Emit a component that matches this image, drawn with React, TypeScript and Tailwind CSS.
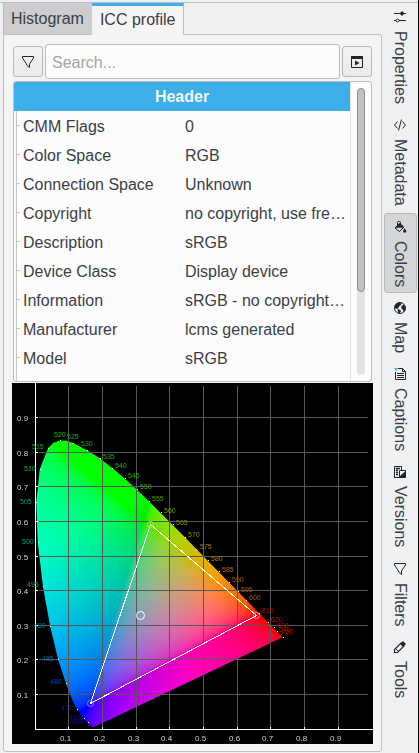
import { useLayoutEffect, useRef, type ReactNode } from 'react';

const FIELDS: [string, string][] = [
  ['CMM Flags', '0'],
  ['Color Space', 'RGB'],
  ['Connection Space', 'Unknown'],
  ['Copyright', 'no copyright, use fre…'],
  ['Description', 'sRGB'],
  ['Device Class', 'Display device'],
  ['Information', 'sRGB - no copyright…'],
  ['Manufacturer', 'lcms generated'],
  ['Model', 'sRGB'],
];

/* Chart geometry: plot origin and the size of one chromaticity unit. */
const SIZE = 361;
const X0 = 23;
const Y0 = 346;
const UX = 337;
const UY = 346;

const toX = (cx: number) => X0 + cx * UX;
const toY = (cy: number) => Y0 - cy * UY;

/* Grid line pixel for each tenth. */
const gridX = (n: number) => Math.floor(toX(n / 10));
const gridY = (n: number) => Math.floor(toY(n / 10));

/* Spectral locus, CIE 1931 xy. */
const LOCUS: [number, number][] = [
  [0.1741, 0.005], [0.1714, 0.0051], [0.1644, 0.0109], [0.1566, 0.0177], [0.144, 0.0297],
  [0.1241, 0.0578], [0.1096, 0.0868], [0.0913, 0.1327], [0.0687, 0.2007], [0.0454, 0.295],
  [0.0235, 0.4127], [0.0082, 0.5384], [0.0039, 0.6548], [0.0139, 0.7502], [0.0389, 0.812],
  [0.055, 0.827], [0.0743, 0.8338], [0.0943, 0.833], [0.1142, 0.8262], [0.1547, 0.8059],
  [0.1929, 0.7816], [0.2296, 0.7543], [0.2658, 0.7243], [0.3016, 0.6923], [0.3373, 0.6589],
  [0.3731, 0.6245], [0.4087, 0.5896], [0.4441, 0.5547], [0.4788, 0.5202], [0.5125, 0.4866],
  [0.5448, 0.4544], [0.5752, 0.4242], [0.6029, 0.3965], [0.627, 0.3725], [0.6658, 0.334],
  [0.6915, 0.3083], [0.7079, 0.292], [0.719, 0.2809], [0.7347, 0.2653],
];

/* Wavelength, label position, colour. */
const WAVES: [number, number, number, string][] = [
  [450, 60, 341, '#2a00a0'], [460, 57, 337, '#1c00a8'], [470, 49, 327, '#0018b0'],
  [480, 38, 301, '#0048b0'], [485, 30, 278, '#0068a8'], [490, 22, 245, '#007c98'],
  [495, 15, 204, '#009c84'], [500, 10, 161, '#00a47c'], [505, 8, 121, '#00a468'],
  [510, 12, 88, '#00a850'], [515, 20, 66, '#00ac30'], [520, 42, 54, '#18bc18'],
  [525, 55, 56, '#18a818'], [530, 69, 63, '#18b010'], [535, 91, 76, '#20b010'],
  [540, 103, 85, '#28b008'], [545, 116, 95, '#30a808'], [550, 128, 106, '#38a808'],
  [555, 140, 118, '#50a800'], [560, 152, 130, '#68a000'], [565, 164, 142, '#7c9400'],
  [570, 176, 154, '#8c8c00'], [575, 188, 166, '#9c8400'], [580, 199, 178, '#a47800'],
  [585, 210, 189, '#ac6c00'], [590, 220, 199, '#b06000'], [595, 229, 209, '#b85400'],
  [600, 237, 217, '#bc4c08'], [610, 250, 230, '#b41c08'], [620, 259, 239, '#b81408'],
  [630, 265, 245, '#a80c08'], [640, 267, 249, '#a80c08'], [650, 270, 251, '#b00c08'],
];

const MARKS = LOCUS.filter((_, i) => i > 2 && i !== 6 && i !== 15 && i !== 17);
const TENTHS = [1, 2, 3, 4, 5, 6, 7, 8, 9];

function gamma(v: number) {
  const c = Math.min(1, Math.max(0, v));
  return 255 * (c <= 0.0031308 ? 12.92 * c : 1.055 * Math.pow(c, 1 / 2.4) - 0.055);
}

function CieTongue() {
  const ref = useRef<HTMLCanvasElement>(null);

  useLayoutEffect(() => {
    const ctx = ref.current?.getContext('2d');
    if (!ctx) return;
    const image = ctx.createImageData(SIZE, SIZE);
    for (let py = 0; py < SIZE; py++) {
      for (let px = 0; px < SIZE; px++) {
        const x = (px - X0) / UX;
        const y = (Y0 - py) / UY;
        const z = 1 - x - y;
        const at = (py * SIZE + px) * 4;
        image.data[at] = gamma(3.1339 * x - 1.6169 * y - 0.4906 * z);
        image.data[at + 1] = gamma(-0.9788 * x + 1.9161 * y + 0.0335 * z);
        image.data[at + 2] = gamma(0.0719 * x - 0.229 * y + 1.4052 * z);
        image.data[at + 3] = 255;
      }
    }
    ctx.globalCompositeOperation = 'source-over';
    ctx.putImageData(image, 0, 0);
    ctx.globalCompositeOperation = 'destination-in';
    ctx.beginPath();
    LOCUS.forEach(([x, y]) => ctx.lineTo(toX(x), toY(y)));
    ctx.closePath();
    ctx.fill();
  }, []);

  return (
    <div className="relative aspect-square w-full bg-black">
      <canvas ref={ref} width={SIZE} height={SIZE} className="block h-full w-full" />
      <svg viewBox="0 0 361 361" className="absolute inset-0 h-full w-full" role="img" aria-label="CIE chromaticity diagram">
        <g stroke="#585858" strokeWidth="1" shapeRendering="crispEdges">
          {TENTHS.map((n) => (
            <path key={n} d={`M${gridX(n) + 0.5} 3V346M27 ${gridY(n) + 0.5}H356`} />
          ))}
        </g>
        <g stroke="#fff" strokeWidth="1" shapeRendering="crispEdges" fill="none">
          <path d="M23.5 0V346.5H361" />
          {TENTHS.map((n) => (
            <path key={n} d={`M${gridX(n) + 0.5} 344V347M23 ${gridY(n) + 0.5}H26`} />
          ))}
        </g>
        <g fill="#fff" shapeRendering="crispEdges">
          {MARKS.map(([x, y]) => (
            <rect key={x} x={Math.round(toX(x))} y={Math.floor(toY(y))} width="1" height="1" />
          ))}
        </g>
        <g className="font-['Liberation_Sans',Arial,sans-serif]" fontSize="8" fill="#d4d4d4">
          {TENTHS.map((n) => (
            <text key={n} x="5" y={gridY(n) + 4}>{`0.${n}`}</text>
          ))}
          {TENTHS.map((n) => (
            <text key={n} x={gridX(n) - 8} y="358">{`0.${n}`}</text>
          ))}
        </g>
        <g className="font-['Liberation_Sans',Arial,sans-serif]" fontSize="7">
          {WAVES.map(([nm, x, y, color]) => (
            <text key={nm} x={x} y={y} fill={color}>{nm}</text>
          ))}
        </g>
        <g fill="none" strokeWidth="1">
          <path d="M138.5 141.5L244.5 232.5L78.5 320.5Z" stroke="#fff" shapeRendering="crispEdges" />
          <circle cx="138.5" cy="141.5" r="3" stroke="#b4e664" />
          <circle cx="244.5" cy="232.5" r="3" stroke="#ff9c9c" />
          <circle cx="78.5" cy="320.5" r="3" stroke="#8c78ff" />
          <circle cx="128.5" cy="232.5" r="4" stroke="#fff" />
        </g>
      </svg>
    </div>
  );
}

function Icon({ children }: { children: ReactNode }) {
  return (
    <svg viewBox="0 0 14 14" className="h-[14px] w-[14px] shrink-0" fill="none" stroke="#232629" strokeWidth="1" aria-hidden="true">
      {children}
    </svg>
  );
}

const Funnel = () => (
  <Icon>
    <path d="M1.5 1.5H12.5V3L8.5 9V12.5L5.5 10V9L1.5 3Z" strokeLinejoin="round" />
  </Icon>
);

const SIDE_TABS: { name: string; icon: ReactNode }[] = [
  {
    name: 'Properties',
    icon: (
      <Icon>
        <path d="M1 3.5H13M1 10.5H3M6 10.5H13" />
        <path d="M9 1L11.5 3.5L9 6L6.5 3.5Z" fill="#232629" stroke="none" />
        <circle cx="4.5" cy="10.5" r="1.5" />
      </Icon>
    ),
  },
  {
    name: 'Metadata',
    icon: (
      <Icon>
        <path d="M4.5 3.5L1.5 7L4.5 10.5M9.5 3.5L12.5 7L9.5 10.5M8.5 1.5L5.5 12.5" />
      </Icon>
    ),
  },
  {
    name: 'Colors',
    icon: (
      <Icon>
        <path d="M4.5 5.5V2.5Q4.5 1.5 5.5 1.5H6.5Q7.5 1.5 7.5 2.5V5.5" />
        <path d="M6.5 3.5L10.5 7.5L6.5 11.5L2 8Z" />
        <path d="M2 7.7H10.8L10 5.5L6.5 3Z" fill="#232629" stroke="none" />
        <path d="M11.5 8C13 10.3 13.6 11 13.2 12C12.6 13 10.8 13 10.2 12C9.9 11 10.5 10 11.5 8Z" fill="#232629" stroke="none" />
      </Icon>
    ),
  },
  {
    name: 'Map',
    icon: (
      <Icon>
        <circle cx="7" cy="7" r="5.5" />
        <path d="M1.5 5L3 2.5L6 1.2L8.5 2L8 4L6 5.5L5.5 7L4 8L2 7Z" fill="#232629" stroke="none" />
        <path d="M8.5 5L11 3.5L12.5 6.5L12 9.5L10.5 11L9.8 8.5L8.2 7.5Z" fill="#232629" stroke="none" />
        <path d="M4.5 8L7 8.8L8 10L6.8 12.5L5 11.5Z" fill="#232629" stroke="none" />
      </Icon>
    ),
  },
  {
    name: 'Captions',
    icon: (
      <Icon>
        <path d="M5 1.5H9.5L12.5 4.5V12.5H2.5V5" />
        <path d="M9.5 1.5V4.5H12.5" />
        <path d="M4 6.5H11M4 8.5H11M4 10.5H11" />
        <path d="M1 1H5L3 4Z" fill="#3daee9" stroke="none" />
      </Icon>
    ),
  },
  {
    name: 'Versions',
    icon: (
      <Icon>
        <path d="M8.5 5V1.5H1.5V12.5H12.5V5.5H6.5V12" />
        <path d="M3 3.5H7M3 5.5H5M3 7.5H5M3 9.5H5" strokeWidth="1.3" />
        <path d="M7 12V11L12 6.5V12Z" fill="#232629" stroke="none" />
      </Icon>
    ),
  },
  { name: 'Filters', icon: <Funnel /> },
  {
    name: 'Tools',
    icon: (
      <Icon>
        <path d="M1.5 12.5V9.5L8 3L11 6L4.5 12.5Z" strokeWidth="1.2" />
        <path d="M7 4L10 1L13 4L10 7Z" fill="#232629" stroke="none" />
        <path d="M3 9L5 11" />
      </Icon>
    ),
  },
];

const toolButton =
  'flex h-[31px] w-[30px] shrink-0 items-center justify-center rounded-[3px] border border-[#b6b8b9] bg-linear-to-b from-[#f2f3f3] to-[#e9eaeb]';

export default function App() {
  return (
    <div className="flex w-full bg-[#eff0f1] font-['Liberation_Sans',Arial,sans-serif] text-base leading-5 text-[#3b3f43]">
      <div className="flex min-w-0 flex-1 flex-col">
        <div className="h-[3px] border-b border-[#bcbebf]" />
        <div className="flex">
          <main className="ml-[3px] min-w-0 flex-1 pb-px">
            <div role="tablist" className="flex h-[31px]">
              <button role="tab" aria-selected="false" className="border-l border-[#bcbebf] bg-[#cbcdce] pr-2 pl-[7px]">
                Histogram
              </button>
              <button
                role="tab"
                aria-selected="true"
                className="z-10 -mb-px border-t-3 border-r border-t-[#3daee9] border-r-[#bcbebf] bg-[#f4f4f4] px-2 pb-[2px]"
              >
                ICC profile
              </button>
            </div>
            <section className="rounded-[3px] rounded-tl-none border border-[#bcbebf] bg-[#f4f4f4] px-2 pt-[9px] pb-[7px]">
              <div className="mx-px flex items-center gap-[2px]">
                <button aria-label="Filter" className={toolButton}>
                  <Funnel />
                </button>
                <input
                  type="text"
                  aria-label="Search"
                  placeholder="Search..."
                  className="h-[35px] min-w-0 flex-1 rounded-[3px] border border-[#bcbebf] bg-[#fcfcfc] px-[6px] pt-[2px] placeholder:text-[#a3a5a7]"
                />
                <button aria-label="Options" className={toolButton}>
                  <Icon>
                    <path d="M1.5 1.5H12.5V12.5H1.5Z" />
                    <path d="M1 1H13V4H1ZM5 5.5L9.5 8L5 10.5Z" fill="#232629" stroke="none" />
                  </Icon>
                </button>
              </div>

              <div className="mx-px mt-[2px] mb-px flex rounded-[3px] border border-[#bcbebf] bg-[#fcfcfc]">
                <div className="flex min-w-0 flex-1 flex-col border-r border-[#e2e3e4]">
                  <table className="w-full table-fixed border-collapse">
                    <thead>
                      <tr>
                        <th colSpan={2} className="h-[29px] rounded-tl-[2px] bg-[#3daee9] p-0 pt-px font-bold text-[#f4f8fb]">
                          Header
                        </th>
                      </tr>
                    </thead>
                    <tbody>
                      {FIELDS.map(([name, value]) => (
                        <tr key={name}>
                          <th scope="row" className="p-0 text-left font-normal">
                            <div className="ml-[2px] flex h-[29px] items-center gap-[3px] border-l border-[#c4c6c7]">
                              <span className="h-px w-[3px] bg-[#c4c6c7]" />
                              <span className="pt-[2px]">{name}</span>
                            </div>
                          </th>
                          <td className="truncate p-0 pt-[2px] pl-[3px]">{value}</td>
                        </tr>
                      ))}
                    </tbody>
                  </table>
                  <div className="ml-[2px] h-[9px] border-l border-[#c4c6c7]" />
                </div>
                <div className="flex w-[20px] justify-center py-[6px]">
                  <div className="w-2 rounded-full bg-[#e2e3e4]">
                    <div className="h-[71%] rounded-full border border-[#8e9091] bg-[#bfc1c2]" />
                  </div>
                </div>
              </div>

              <CieTongue />
            </section>
          </main>

          <nav className="flex w-9 flex-col items-center gap-px">
            {SIDE_TABS.map(({ name, icon }) => (
              <button
                key={name}
                className={
                  'flex w-[33px] items-center gap-[7px] rounded-[3px] border pt-[6px] pb-[5px] [writing-mode:vertical-rl] ' +
                  (name === 'Colors' ? 'border-[#b6b8b9] bg-[#d3d5d6]' : 'border-transparent')
                }
              >
                {icon}
                <span>{name}</span>
              </button>
            ))}
          </nav>
        </div>
      </div>
      <div className="w-px bg-black" />
    </div>
  );
}
